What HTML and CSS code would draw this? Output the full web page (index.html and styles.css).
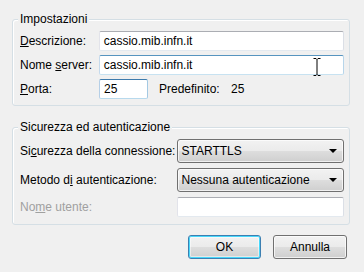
FILE: index.html
```html
<!DOCTYPE html>
<html>
<head>
<meta charset="utf-8">
<link rel="stylesheet" href="styles.css">
</head>
<body>
<div class="dialog">
  <div class="group g1">
    <span class="title">Impostazioni</span>
    <div class="row">
      <span class="label"><u>D</u>escrizione:</span>
      <div class="input wide">cassio.mib.infn.it</div>
    </div>
    <div class="row">
      <span class="label">Nome <u>s</u>erver:</span>
      <div class="input wide hover">cassio.mib.infn.it
        <svg class="ibeam" width="8" height="18" viewBox="0 0 8 18"><path d="M0.5 0.5h2.5l1 1 1-1h2.5M4 1.5v15M0.5 17.5h2.5l1-1 1 1h2.5" fill="none" stroke="#000" stroke-width="1"/></svg>
      </div>
    </div>
    <div class="row">
      <span class="label"><u>P</u>orta:</span>
      <div class="input port focus">25</div>
      <span class="def">Predefinito:</span>
      <span class="defval">25</span>
    </div>
  </div>

  <div class="group g2">
    <span class="title">Sicurezza ed autenticazione</span>
    <div class="row srow">
      <span class="label2">Si<u>c</u>urezza della connessione:</span>
      <div class="select">STARTTLS<span class="arrow"></span></div>
    </div>
    <div class="row srow">
      <span class="label2">Metodo d<u>i</u> autenticazione:</span>
      <div class="select">Nessuna autenticazione<span class="arrow"></span></div>
    </div>
    <div class="row">
      <span class="label2 disabled">No<u>m</u>e utente:</span>
      <div class="input user"></div>
    </div>
  </div>

  <div class="buttons">
    <div class="btn default">OK</div>
    <div class="btn">Annulla</div>
  </div>
</div>
</body>
</html>
```

FILE: styles.css
```css
html, body {
  margin: 0;
  padding: 0;
  background: #f0f0f0;
}
body {
  width: 364px;
  height: 272px;
  overflow: hidden;
  font-family: "Liberation Sans", Arial, sans-serif;
  font-size: 12px;
  color: #000;
}
u { text-decoration: underline; text-underline-offset: 1px; }
.dialog {
  padding: 19px 14px 0 12px;
}
.group {
  position: relative;
  border: 1px solid #d5dfe5;
  border-radius: 3px;
  box-shadow: inset 1px 1px 0 #fff;
  display: flex;
  flex-direction: column;
  padding: 11px 5px 6px 7px;
}
.g1 { gap: 4px; }
.g2 {
  margin-top: 21px;
  gap: 5px;
  padding-bottom: 7px;
}
.title {
  position: absolute;
  top: -9px;
  left: 5px;
  padding: 0 2px;
  background: #f0f0f0;
  line-height: 16px;
}
.row {
  display: flex;
  align-items: center;
  height: 20px;
}
.srow { height: 24px; }
.label { width: 79px; }
.label2 { width: 157px; }
.disabled { color: #a0a0a0; }
.input {
  position: relative;
  box-sizing: border-box;
  height: 20px;
  background: #fff;
  border: 1px solid;
  border-color: #abadb3 #dbdfe6 #e3e9ef #e2e3ea;
  border-radius: 2px;
  padding: 0 4px;
  line-height: 18px;
}
.wide { width: 246px; }
.hover { border-color: #5794bf #b7d5ea #c7e2f1 #c5daed; }
.focus { border-color: #3d7bad #a4c9e3 #b7d9ed #b5cfe7; }
.port { width: 49px; }
.user { width: 168px; }
.def { margin-left: 11px; width: 72px; }
.defval { }
.ibeam {
  position: absolute;
  left: 213px;
  top: 2px;
}
.select {
  position: relative;
  box-sizing: border-box;
  width: 168px;
  height: 24px;
  border: 1px solid #707070;
  border-radius: 3px;
  background: linear-gradient(#f2f2f2 0%, #ebebeb 48%, #dddddd 52%, #cfcfcf 100%);
  box-shadow: inset 0 0 0 1px rgba(255,255,255,0.7);
  padding: 0 4px;
  line-height: 22px;
}
.arrow {
  position: absolute;
  right: 6px;
  top: 9px;
  width: 0;
  height: 0;
  border-left: 4px solid transparent;
  border-right: 4px solid transparent;
  border-top: 4px solid #000;
}
.buttons {
  display: flex;
  justify-content: flex-end;
  gap: 12px;
  margin-top: 10px;
  padding-right: 3px;
}
.btn {
  box-sizing: border-box;
  width: 74px;
  height: 24px;
  border: 1px solid #707070;
  border-radius: 3px;
  background: linear-gradient(#f2f2f2 0%, #ebebeb 48%, #dddddd 52%, #cfcfcf 100%);
  box-shadow: inset 0 0 0 1px rgba(255,255,255,0.7);
  text-align: center;
  line-height: 22px;
}
.btn.default {
  width: 73px;
  border-color: #3c7fb1;
  box-shadow: inset 0 0 0 1px #48d8fb, inset 0 0 0 2px rgba(255,255,255,0.5);
}
```
